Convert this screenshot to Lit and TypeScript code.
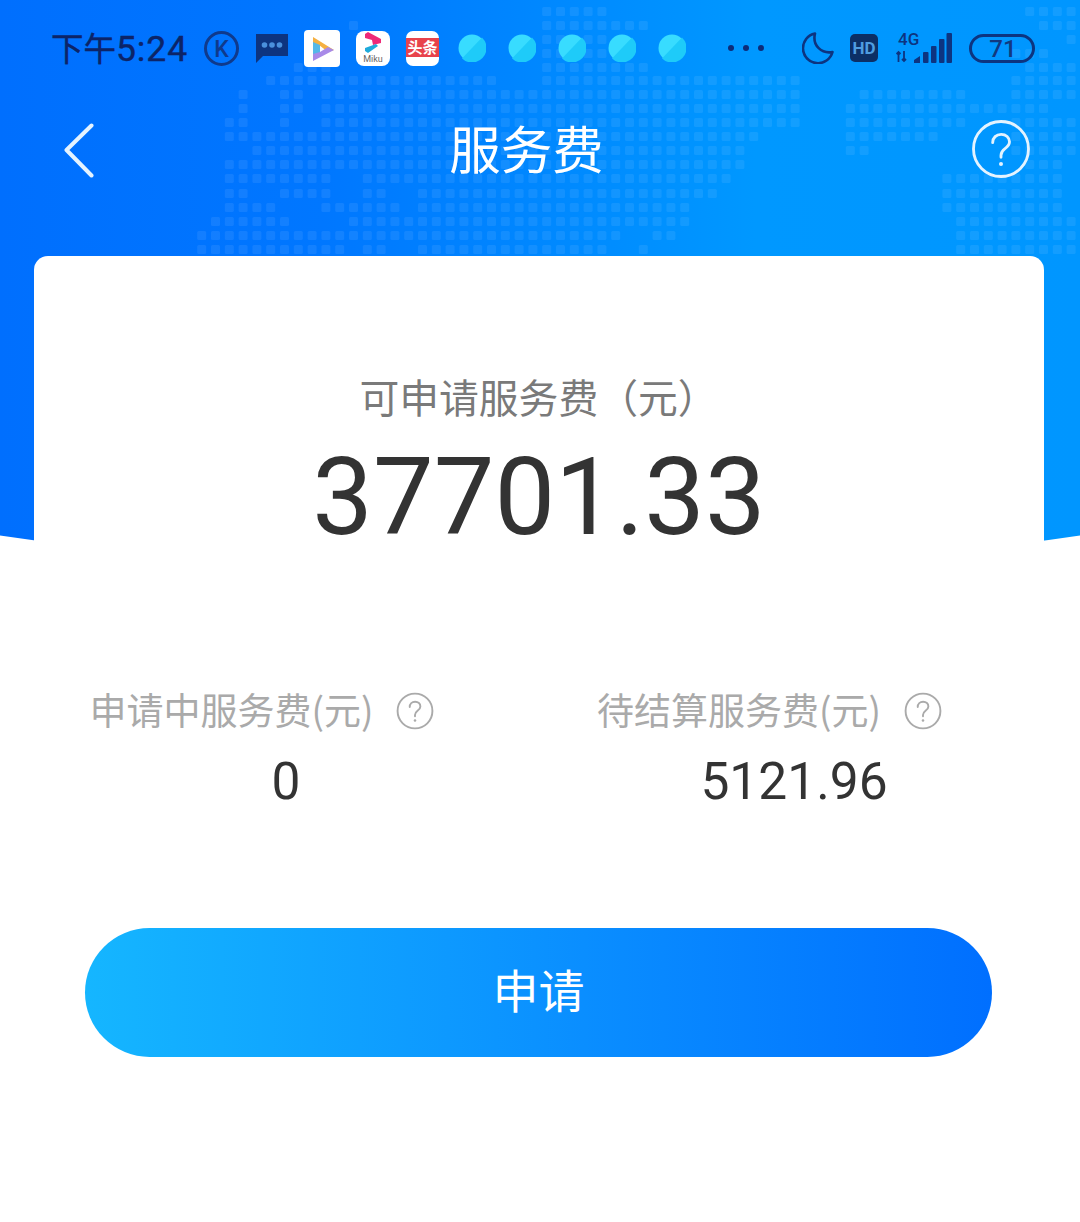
import { LitElement, html, css, svg } from 'lit';
import { customElement } from 'lit/decorators.js';

// [row y, [x from, x to], ...] for the dotted world map behind the header
const MAP_ROWS: [number, number[][]][] = [
  [11, [[540, 610], [1020, 1080]]],
  [25, [[340, 360], [540, 650], [1030, 1080]]],
  [39, [[540, 610], [1060, 1080]]],
  [53, [[300, 330], [540, 600], [1000, 1050]]],
  [67, [[290, 330], [540, 650], [1020, 1080]]],
  [80, [[260, 500], [540, 800], [1000, 1080]]],
  [94, [[228, 245], [270, 300], [320, 800], [850, 960], [1000, 1080]]],
  [108, [[228, 245], [270, 300], [320, 800], [840, 1040]]],
  [122, [[212, 245], [280, 292], [320, 800], [835, 960], [1000, 1080]]],
  [136, [[212, 760], [835, 930], [1000, 1080]]],
  [150, [[240, 745], [835, 860], [1010, 1080]]],
  [164, [[212, 745], [1020, 1060]]],
  [178, [[212, 325], [360, 730], [940, 1060]]],
  [193, [[212, 240], [280, 325], [360, 390], [410, 715], [940, 1060]]],
  [207, [[212, 275], [320, 395], [415, 690], [940, 1060]]],
  [221, [[200, 287], [345, 690], [955, 1070]]],
  [235, [[185, 623], [650, 670], [952, 1080]]],
  [249, [[185, 340], [360, 380], [412, 605], [630, 650], [952, 1080]]],
];

const PITCH = 13.8;

const mapDots = () =>
  MAP_ROWS.flatMap(([y, ranges]) =>
    ranges.flatMap(([from, to]) => {
      const cells = [];
      const start = Math.ceil((from - 4) / PITCH);
      const end = Math.floor((to - 4) / PITCH);
      for (let i = start; i <= end; i++) {
        cells.push(svg`<rect x=${i * PITCH + 4} y=${y - 4} width="9" height="9" rx="1.5"></rect>`);
      }
      return cells;
    })
  );

const helpIcon = (size: number, stroke: number) => html`
  <svg class="help" width=${size} height=${size} viewBox="0 0 36 36" fill="none" stroke="currentColor">
    <circle cx="18" cy="18" r="16.5" stroke-width=${stroke}></circle>
    <path d="M13 14.2c0-3 2.2-5 5.1-5s5 1.9 5 4.5c0 2-1.2 3-2.7 4.1-1.5 1.1-2.4 2-2.4 4v1.2" stroke-width=${stroke}
      stroke-linecap="round"></path>
    <circle cx="18" cy="27" r="1.2" fill="currentColor" stroke="none"></circle>
  </svg>
`;

const blob = () => html`
  <svg class="blob" width="28" height="28" viewBox="0 0 28 28">
    <circle cx="14" cy="14" r="13.5" fill="#38dcff"></circle>
    <path d="M4 24.5 24 3.5A14 14 0 0 1 4 24.5Z" fill="#1ecbf9"></path>
  </svg>
`;

@customElement('app-root')
export class AppRoot extends LitElement {
  static styles = css`
    :host {
      display: block;
      position: relative;
      width: 1080px;
      min-height: 1222px;
      background: #fff;
      overflow: hidden;
      font-family: "Roboto", "Noto Sans CJK SC", sans-serif;
    }

    .bg {
      position: absolute;
      left: 0;
      top: 0;
      width: 1080px;
      height: 600px;
      background: linear-gradient(90deg, #006ffe 0%, #0077ff 30%, #0098ff 70%, #0096ff 100%);
      clip-path: circle(3700px at 540px -3125px);
    }

    .bg svg {
      display: block;
      fill: #fff;
      fill-opacity: 0.075;
      filter: blur(0.6px);
    }

    .page {
      position: relative;
      display: flex;
      flex-direction: column;
    }

    .status {
      display: flex;
      align-items: center;
      height: 46px;
      margin-top: 25px;
      padding-left: 51px;
      color: #0d2b78;
    }

    .status svg {
      display: block;
      flex: none;
    }

    .time {
      width: 137px;
      font-size: 35.5px;
      line-height: 46px;
      white-space: nowrap;
      letter-spacing: 0.9px;
      color: #0c2468;
      -webkit-text-stroke: 0.4px #0c2468;
    }

    .time span {
      font-family: "Noto Sans CJK SC", sans-serif;
      font-size: 32.5px;
      letter-spacing: 0;
    }

    .k { margin-left: 16px; }
    .chat { margin-left: 17px; }
    .app1 { margin-left: 16px; }
    .app2, .app3 { margin-left: 16px; }
    .blobs {
      display: flex;
      gap: 22px;
      margin-left: 19px;
    }
    .more {
      display: flex;
      gap: 9px;
      margin-left: 42px;
    }
    .more i {
      width: 6px;
      height: 6px;
      border-radius: 50%;
      background: #0d2b78;
    }
    .moon { margin-left: 38px; }
    .hd { margin-left: 16px; }
    .status .signal {
      margin: -4px 0 0 18px;
    }
    .battery { margin-left: 17px; }

    .nav {
      display: flex;
      align-items: center;
      justify-content: space-between;
      height: 80px;
      margin-top: 39px;
      padding: 0 49px 0 64px;
      color: #fff;
    }

    .nav .title {
      position: absolute;
      left: 0;
      right: 0;
      margin-top: -6px;
      text-align: center;
      padding-right: 27px;
      font-family: "Noto Sans CJK SC", sans-serif;
      font-size: 51.5px;
      line-height: 80px;
    }

    .nav .help {
      display: block;
      margin-top: -3px;
      color: #e4f3ff;
    }

    .card {
      display: flex;
      flex-direction: column;
      width: 1010px;
      margin: 66px 0 0 34px;
      padding-top: 112px;
      border-radius: 14px 14px 0 0;
      background: #fff;
    }

    .label {
      font-family: "Noto Sans CJK SC", sans-serif;
      font-size: 39.8px;
      line-height: 56px;
      color: #7a7a7a;
      text-align: center;
      padding-right: 1px;
    }

    .amount {
      margin-top: 13px;
      font-size: 108px;
      line-height: 120px;
      color: #333;
      text-align: center;
    }

    .stats {
      display: grid;
      grid-template-columns: 504px 512px;
      margin-top: 127px;
    }

    .stat-label {
      display: flex;
      align-items: center;
      height: 50px;
      font-size: 37px;
      color: #aaa;
      white-space: nowrap;
      font-family: "Noto Sans CJK SC", sans-serif;
    }

    .stat-label .help {
      margin: 4px 0 0 22.5px;
      flex: none;
    }

    .left .stat-label { padding-left: 55.5px; }
    .right .stat-label { padding-left: 59px; }

    .value {
      margin-top: 18px;
      font-size: 51.5px;
      line-height: 60px;
      color: #333;
      text-align: center;
    }

    .apply {
      display: flex;
      align-items: center;
      justify-content: center;
      width: 907px;
      height: 129px;
      margin: 116px 0 0 51px;
      padding-bottom: 10px;
      box-sizing: border-box;
      border-radius: 65px;
      background: linear-gradient(90deg, #15b6ff 0%, #0a8eff 55%, #006fff 100%);
      color: #fff;
      font-family: "Noto Sans CJK SC", sans-serif;
      font-size: 46px;
    }
  `;

  render() {
    return html`
      <div class="bg">
        <svg width="1080" height="256" viewBox="0 0 1080 256">${mapDots()}</svg>
      </div>
      <div class="page">
        <div class="status">
          <div class="time"><span>下午</span>5:24</div>
          <svg class="k" width="35" height="35" viewBox="0 0 35 35">
            <circle cx="17.5" cy="17.5" r="16" fill="none" stroke="#0f3a8c" stroke-width="3"></circle>
            <text x="17.5" y="25.5" text-anchor="middle" font-size="23" font-weight="500" font-family="Roboto" fill="#0f3a8c">K</text>
          </svg>
          <svg class="chat" width="32" height="29" viewBox="0 0 32 29">
            <path d="M0 0h32v22H7l-7 7Z" fill="#0d3480"></path>
            <circle cx="8.5" cy="11" r="2.8" fill="#4a90dc"></circle>
            <circle cx="16" cy="11" r="2.8" fill="#4a90dc"></circle>
            <circle cx="23.5" cy="11" r="2.8" fill="#4a90dc"></circle>
          </svg>
          <svg class="app1" width="36" height="37" viewBox="0 0 36 37">
            <rect width="36" height="37" rx="4" fill="#fff"></rect>
            <path d="M9 7l21 13-6 2-9-7H9Z" fill="#f5b041"></path>
            <path d="M9 12l7 3v9l-7 6Z" fill="#55b8e8"></path>
            <path d="M9 31l21-11-6-3-8 5-7 2Z" fill="#a88ae8"></path>
          </svg>
          <svg class="app2" width="34" height="35" viewBox="0 0 34 35">
            <rect width="34" height="35" rx="8" fill="#fff"></rect>
            <path d="M9 3l3-2 13 7v4l-8 2-1-5-7-2Z" fill="#ee2a78"></path>
            <path d="M9 17l11-4 2 2-10 7-3-2Z" fill="#1eaadb"></path>
            <text x="17" y="30.5" text-anchor="middle" font-size="9" font-family="Roboto" fill="#666">Miku</text>
          </svg>
          <svg class="app3" width="33" height="35" viewBox="0 0 33 35">
            <rect width="33" height="35" rx="7" fill="#fff"></rect>
            <rect y="7" width="33" height="19" fill="#e8434c"></rect>
            <text x="16.5" y="22" text-anchor="middle" font-size="15" font-weight="700" font-family="Noto Sans CJK SC" fill="#fff">头条</text>
          </svg>
          <div class="blobs">${blob()}${blob()}${blob()}${blob()}${blob()}</div>
          <div class="more"><i></i><i></i><i></i></div>
          <svg class="moon" width="32" height="32" viewBox="0 0 32 32">
            <path d="M13 1.5A15 15 0 1 0 30.5 20C20 22 10 14 13 1.5Z" fill="none" stroke="#0d3480" stroke-width="2.6" stroke-linejoin="round"></path>
          </svg>
          <svg class="hd" width="28" height="28" viewBox="0 0 28 28">
            <rect width="28" height="28" rx="5" fill="#0c2f66"></rect>
            <text x="14" y="20" text-anchor="middle" font-size="17" font-weight="700" font-family="Roboto" fill="#4f9de0">HD</text>
          </svg>
          <svg class="signal" width="56" height="36" viewBox="0 -4 56 36">
            <text x="2" y="13" font-size="17" font-weight="500" font-family="Roboto" fill="#0d3480">4G</text>
            <path d="M2.5 30v-10M8 19v10M6 27l2 2 2-2M.5 22l2-2 2 2" fill="none" stroke="#0d3480" stroke-width="1.8"></path>
            <path d="M18 31v-3l6-4v7Z" fill="#0d3480"></path>
            <rect x="27" y="20" width="5.5" height="11" rx="1" fill="#0d3480"></rect>
            <rect x="35" y="14" width="5.5" height="17" rx="1" fill="#0d3480"></rect>
            <rect x="43" y="7" width="5.5" height="24" rx="1" fill="#0d3480"></rect>
            <rect x="50.5" y="1" width="5.5" height="30" rx="1" fill="#0d3480"></rect>
          </svg>
          <svg class="battery" width="66" height="29" viewBox="0 0 66 29">
            <rect x="1.5" y="1.5" width="63" height="26" rx="13" fill="none" stroke="#0d3480" stroke-width="3"></rect>
            <text x="34" y="23" text-anchor="middle" font-size="24" font-weight="500" font-family="Roboto" fill="#12397f">71</text>
          </svg>
        </div>
        <div class="nav">
          <svg width="30" height="55" viewBox="0 0 30 55" fill="none" stroke="#e4f3ff" stroke-width="4" stroke-linecap="round" stroke-linejoin="round">
            <path d="M27.5 2.5 2.5 27l25 25.5"></path>
          </svg>
          <div class="title">服务费</div>
          <span>${helpIcon(60, 1.7)}</span>
        </div>
        <div class="card">
          <div class="label">可申请服务费（元）</div>
          <div class="amount">37701.33</div>
          <div class="stats">
            <div class="left">
              <div class="stat-label">申请中服务费(元)${helpIcon(38, 1.8)}</div>
              <div class="value">0</div>
            </div>
            <div class="right">
              <div class="stat-label">待结算服务费(元)${helpIcon(38, 1.8)}</div>
              <div class="value">5121.96</div>
            </div>
          </div>
          <div class="apply">申请</div>
        </div>
      </div>
    `;
  }
}
